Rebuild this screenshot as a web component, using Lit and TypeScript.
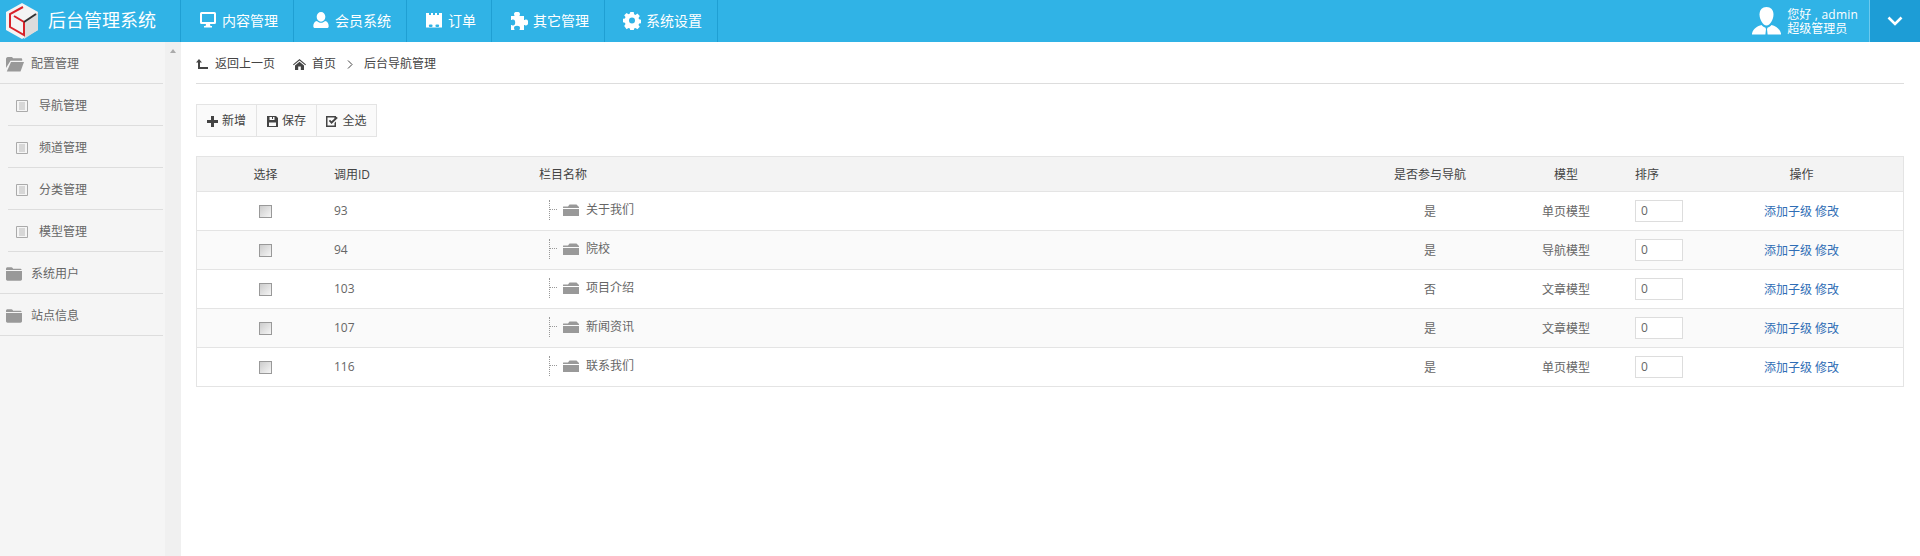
import { LitElement, html, css, svg } from "lit";
import { customElement } from "lit/decorators.js";

const icons: Record<string, any> = {
  desktop: svg`<path d="M1 1.500A1.500 1.500 0 0 1 2.500 0h13A1.500 1.500 0 0 1 17 1.500v9a1.500 1.500 0 0 1-1.500 1.500h-13A1.500 1.500 0 0 1 1 10.500zM3 2v8h12V2zM7 12h4l.4 2H13v1.500H5V14h1.600z" fill-rule="evenodd"/>`,
  user: svg`<path d="M9 0a4.300 4.600 0 0 1 4.300 4.800A4.300 4.800 0 0 1 9 9.700a4.300 4.800 0 0 1-4.300-4.900A4.300 4.600 0 0 1 9 0zM5 9c1 1.200 2.400 1.800 4 1.800s3-.6 4-1.800c2.500.4 3.700 2.300 3.700 5.200 0 1.300-.9 1.800-2 1.800H3.300c-1.100 0-2-.5-2-1.800C1.300 11.300 2.500 9.400 5 9z"/>`,
  fort: svg`<path d="M1 1h3v2h2V1h2v2h2V1h2v2h2V1h3v14.500H1z M5 12.500a1.200 1.200 0 0 0 0 2.400h1.400a1.200 1.200 0 0 0 0-2.400z M11.600 12.500a1.200 1.200 0 0 0 0 2.400H13a1.200 1.200 0 0 0 0-2.400z" fill-rule="evenodd"/>`,
  puzzle: svg`<path d="M1 4H4.500C4.500 3 4 2.800 4 2A3 2.200 0 0 1 10 2C10 2.800 9.500 3 9.500 4H14V8C15 8 15.200 7.500 16 7.500A2.200 3 0 0 1 16 13.500C15.200 13.500 15 13 14 13V18H9.500C9.500 17 10 16.800 10 16A3 2.200 0 0 0 4 16C4 16.800 4.500 17 4.500 18H1V13C2 13 2.200 13.500 3 13.500A2.200 3 0 0 0 3 7.500C2.200 7.500 2 8 1 8Z"/>`,
  gear: svg`<path fill-rule="evenodd" d="M7.300 0h3.400l.4 2.300 1.400.6 1.900-1.300 2.400 2.400-1.300 1.900.6 1.400 2.300.4v3.400l-2.300.4-.6 1.400 1.300 1.900-2.400 2.400-1.900-1.300-1.400.6-.4 2.300H7.300l-.4-2.300-1.400-.6-1.900 1.300L1.200 14l1.300-1.900-.6-1.400-2.300-.4V6.900l2.300-.4.6-1.400L1.200 3.300l2.400-2.400 1.900 1.300 1.400-.6zM9 5.500a3 3 0 1 0 0 6 3 3 0 0 0 0-6z"/>`,
};
const navs = [
  { icon: "desktop", label: "内容管理", cls: "" },
  { icon: "user", label: "会员系统", cls: "" },
  { icon: "fort", label: "订单", cls: "short" },
  { icon: "puzzle", label: "其它管理", cls: "" },
  { icon: "gear", label: "系统设置", cls: "" },
];
const subs = ["导航管理", "频道管理", "分类管理", "模型管理"];
const rows = [
  { id: 93, name: "关于我们", nav: "是", model: "单页模型" },
  { id: 94, name: "院校", nav: "是", model: "导航模型" },
  { id: 103, name: "项目介绍", nav: "否", model: "文章模型" },
  { id: 107, name: "新闻资讯", nav: "是", model: "文章模型" },
  { id: 116, name: "联系我们", nav: "是", model: "单页模型" },
];
const folder = svg`<path d="M0 3V1.600C0 .7.700 0 1.600 0h3.800c.8 0 1.200.4 1.600 1.100l.3.500h7.100c.9 0 1.600.4 1.600 1.400z M0 4h16.400v8.500c0 .9-.7 1.500-1.600 1.500H1.600C.7 14 0 13.400 0 12.500z"/>`;

@customElement("app-root")
export class AppRoot extends LitElement {
  static styles = css`
    :host { display: flex; flex-direction: column; height: 100vh; overflow: hidden; background: #fff; color: #555;
      font: 12px/1.4 "Open Sans", "Noto Sans CJK SC", sans-serif; }
    * { box-sizing: border-box; }
    svg { display: block; fill: currentColor; flex: none; }
    header { height: 42px; flex: none; display: flex; background: #30b3e6; color: #fff; }
    .brand { width: 180px; display: flex; align-items: center; padding-left: 5px; gap: 9px; font-size: 18px; }
    .nav { display: flex; border-left: 1px solid #1f9fd3; }
    .nav a { width: 113px; display: flex; align-items: center; justify-content: center; gap: 5px; font-size: 14px; border-right: 1px solid #1f9fd3; padding-left: 3px; }
    .nav a.short { width: 85px; }
    .user { margin-left: auto; display: flex; align-items: center; gap: 6px; padding-right: 11px; }
    .user div { padding-top: 2px; }
    .user small { font-size: 12px; display: block; line-height: 14px; }
    .user small:first-child { letter-spacing: .2px; }
    .more { width: 51px; background: #1d9dd6; border-left: 1px solid #6cc9ee; display: flex; align-items: center; justify-content: center; }
    .body { flex: 1; display: flex; min-height: 0; }
    aside { width: 165px; background: #f5f5f5; flex: none; padding-right: 2px; }
    .top { height: 42px; border-bottom: 1px solid #ddd; display: flex; align-items: center; padding: 3px 0 0 6px; gap: 7px; color: #666; }
    .gap2 { margin-left: 2px; }
    .sub { height: 42px; margin-left: 8px; border-bottom: 1px solid #ddd; display: flex; align-items: center; padding: 3px 0 0 8px; gap: 11px; color: #666; }
    .top svg, .sub svg { color: #999; }
    .scroll { width: 16px; flex: none; background: #f0f0f0; display: flex; justify-content: center; padding-top: 7px; }
    .arrow { width: 0; height: 0; border: 3.500px solid transparent; border-top: 0; border-bottom: 4px solid #aaa; }
    main { flex: 1; padding: 0 16px 0 15px; min-width: 0; }
    .crumb { height: 42px; border-bottom: 1px solid #ddd; display: flex; align-items: center; color: #444; padding-top: 3px; }
    .crumb svg { color: #444; }
    .back { margin-left: 7px; }
    .home { margin: 0 6px 0 18px; }
    .sep { margin: 0 11px; }
    .tools { margin-top: 20px; display: flex; width: max-content; border: 1px solid #e4e4e4; height: 33px; background: #fafafa; color: #444; }
    .tools span { width: 60px; display: flex; align-items: center; justify-content: center; gap: 4px; border-right: 1px solid #e4e4e4; padding-top: 2px; }
    .tools span:last-child { border-right: 0; width: 59px; }
    .tools svg { color: #444; }
    .wrap { margin-top: 19px; border: 1px solid #e4e4e4; border-bottom: 0; }
    table { width: 100%; border-collapse: collapse; table-layout: fixed; }
    th { height: 34px; background: #f3f3f3; font-weight: 400; color: #444; border-bottom: 1px solid #e4e4e4; padding: 3px 0 0; }
    td { height: 39px; border-bottom: 1px solid #e4e4e4; padding: 2px 0 0; text-align: center; color: #666; }
    td.cn { padding-top: 4px; }
    tr:nth-child(even) td { background: #fafafa; }
    .c1 { width: 137px; } .c2 { width: 205px; } .c4 { width: 152px; } .c5 { width: 120px; } .c6 { width: 74px; } .c7 { width: 203px; }
    .l { text-align: left; }
    th.pad, td.pad { padding-left: 9px; }
    .check { appearance: none; display: block; width: 13px; height: 13px; margin: 0 auto; border: 1px solid #999; background: linear-gradient(135deg, #ccc, #f5f5f5); }
    .order { display: block; width: 48px; height: 22px; margin-top: -2px; border: 1px solid #ddd; padding: 0 5px; font: inherit; color: #666; background: #fff; }
    .tree { display: flex; align-items: center; height: 20px; gap: 7px; margin: -3px 0 0 10px; }
    .branch { width: 7px; height: 20px; border-left: 1px dotted #999; }
    .branch::after { content: ""; display: block; width: 7px; margin-top: 9px; border-top: 1px dotted #999; }
    .tree svg { color: #999; }
    td a { color: #2f6db5; }
  `;

  render() {
    return html`
      <header>
        <div class="brand">
          <svg width="34" height="38" viewBox="0 0 34 38">
            <path d="M17 1 33 10v18L17 37 1 28V10z" fill="#f4f4f4"/>
            <path d="M19 20l14-10v18L19 37z" fill="#dcdcdc"/>
            <path d="M18 5 5 12v13l14 8V20L9 14" fill="none" stroke="#d8232a" stroke-width="2"/>
            <path d="M19 20l12-8" stroke="#333" stroke-width="2" fill="none"/>
          </svg>
          <span>后台管理系统</span>
        </div>
        <nav class="nav">
          ${navs.map((n) => html`<a class=${n.cls}><svg width="18" height="18" viewBox="0 0 18 18">${icons[n.icon]}</svg>${n.label}</a>`)}
        </nav>
        <div class="user">
          <svg width="29" height="28" viewBox="0 0 29 28">
            <path d="M14.500 0c4.400 0 7 3 7 7.500 0 4.700-3.300 11-7 11s-7-6.300-7-11C7.500 3 10.100 0 14.500 0z"/>
            <path d="M9.500 18c1.300 1.500 2.600 2.200 3.800 2.500l.7 1.500-.6 5.500h2.200l-.6-5.500.7-1.500c1.200-.3 2.500-1 3.800-2.500 4 1.200 8 3 9.500 8.500v1H0v-1c1.500-5.500 5.500-7.300 9.500-8.500z"/>
          </svg>
          <div><small>您好 , admin</small><small>超级管理员</small></div>
        </div>
        <div class="more">
          <svg width="16" height="10" viewBox="0 0 16 10"><path d="M1.500 1.500 8 8l6.500-6.500" fill="none" stroke="#fff" stroke-width="2.600"/></svg>
        </div>
      </header>
      <div class="body">
        <aside>
          <div class="top">
            <svg width="18" height="15" viewBox="0 0 18 15"><path d="M0 2c0-1 .7-2 1.800-2h3.500c1 0 1.400.6 1.800 1.300h8c.8 0 1.100.6 1.100 1.200v1.200H4.500L0 11z"/><path d="M5 5h13l-3.500 9.500H.8z"/></svg>
            配置管理
          </div>
          ${subs.map((s) => html`<div class="sub">
            <svg width="12" height="12" viewBox="0 0 12 12"><path d="M.5.500h11v11H.500z" fill="none" stroke="#aaa"/><path d="M3 3h6M3 5h6M3 7h6M3 9h6" stroke="#aaa" stroke-width=".8" fill="none"/></svg>
            ${s}</div>`)}
          ${["系统用户", "站点信息"].map((s) => html`<div class="top">
            <svg width="16" height="14" viewBox="0 0 16.400 14">${folder}</svg><span class="gap2">${s}</span></div>`)}
        </aside>
        <div class="scroll"><div class="arrow"></div></div>
        <main>
          <div class="crumb">
            <svg width="12" height="10" viewBox="0 0 12 10"><path d="M3 0 6 3.500H4V8h8v2H2V3.500H0z"/></svg>
            <span class="back">返回上一页</span>
            <svg class="home" width="13" height="11" viewBox="0 0 13 11"><path d="M6.500 0 13 5.500 12.300 6.300 6.500 1.500.7 6.300 0 5.500zM2 6.500l4.500-3.800L11 6.500V11H7.800V7.500H5.200V11H2z"/></svg>
            <span>首页</span>
            <svg class="sep" width="6" height="9" viewBox="0 0 6 9"><path d="M1 .5 5 4.500 1 8.500" fill="none" stroke="currentColor" stroke-width="1"/></svg>
            <span>后台导航管理</span>
          </div>
          <div class="tools">
            <span><svg width="11" height="11" viewBox="0 0 11 11"><path d="M4 0h3v4h4v3H7v4H4V7H0V4h4z"/></svg>新增</span>
            <span><svg width="11" height="11" viewBox="0 0 11 11"><path fill-rule="evenodd" d="M0 0h9l2 2v9H0zM2.500 1v3h5V1H6v2H5V1zM2 6.500V10h7V6.500z"/></svg>保存</span>
            <span><svg width="12" height="11" viewBox="0 0 12 11"><path fill-rule="evenodd" d="M0 0h10v3L8.500 4.500V1.500h-7v8h7V7L10 5.500V11H0z"/><path d="M2.800 5 4 3.800 5.500 5.300 10.500.800 11.800 2 5.500 8z"/></svg>全选</span>
          </div>
          <div class="wrap">
            <table>
              <colgroup><col class="c1" /><col class="c2" /><col /><col class="c4" /><col class="c5" /><col class="c6" /><col class="c7" /></colgroup>
              <thead><tr><th>选择</th><th class="l">调用ID</th><th class="l">栏目名称</th><th>是否参与导航</th><th>模型</th><th class="l pad">排序</th><th>操作</th></tr></thead>
              <tbody>
                ${rows.map((r) => html`<tr>
                  <td><input class="check" type="checkbox" /></td>
                  <td class="l">${r.id}</td>
                  <td class="l"><div class="tree"><span class="branch"></span><svg width="16" height="12" viewBox="0 0 16 12"><path d="M0 4V3c0-.5.500-.5 1-.5h4L6.500.500h7L16 3v1z"/><path d="M0 5h16v7H0z"/></svg><span>${r.name}</span></div></td>
                  <td class="cn">${r.nav}</td>
                  <td class="cn">${r.model}</td>
                  <td class="l pad"><input class="order" .value=${"0"} /></td>
                  <td class="cn"><a>添加子级</a> <a>修改</a></td>
                </tr>`)}
              </tbody>
            </table>
          </div>
        </main>
      </div>
    `;
  }
}
